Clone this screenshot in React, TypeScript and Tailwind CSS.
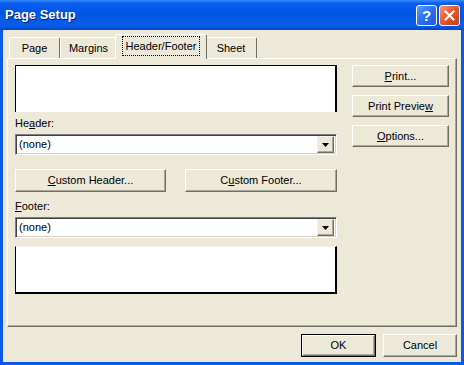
import React from "react";

function Btn({ children, className = "" }: { children: React.ReactNode; className?: string }) {
  return (
    <div
      className={`flex items-center justify-center bg-[#ece9d8] border border-t-white border-l-white border-r-[#716f64] border-b-[#716f64] shadow-[inset_-1px_-1px_0_#aca899] ${className}`}
    >
      {children}
    </div>
  );
}

function Combo() {
  return (
    <div className="h-[21px] w-full flex items-center bg-white border border-t-[#808080] border-l-[#808080] border-r-white border-b-white shadow-[inset_1px_1px_0_#404040,inset_-1px_-1px_0_#d4d0c8] pl-[3px] pr-[2px]">
      <span className="flex-1">(none)</span>
      <div className="w-[17px] h-[17px] flex items-center justify-center bg-[#ece9d8] border border-t-[#f4f3ee] border-l-[#f4f3ee] border-r-[#716f64] border-b-[#716f64] shadow-[inset_-1px_-1px_0_#aca899]">
        <svg width="7" height="4" viewBox="0 0 7 4">
          <path d="M0 0h7L3.5 4z" fill="#000" />
        </svg>
      </div>
    </div>
  );
}

function Tab({ label, w, selected = false }: { label: string; w: string; selected?: boolean }) {
  if (selected) {
    return (
      <div
        className={`${w} h-[25px] -mb-[1px] -mx-[2px] z-10 relative bg-[#ece9d8] border-t border-l border-t-white border-l-white border-r border-r-[#716f64] rounded-t-[2px] flex items-center justify-center pb-[2px]`}
      >
        <span className="px-[3px] py-[1px] leading-[16px] outline outline-1 outline-dotted outline-black">{label}</span>
      </div>
    );
  }
  return (
    <div
      className={`${w} h-[21px] bg-[#ece9d8] border-t border-l border-t-white border-l-white border-r border-r-[#716f64] rounded-t-[2px] flex items-center justify-center pt-[1px]`}
    >
      {label}
    </div>
  );
}

export default function App() {
  return (
    <div className="w-[464px] h-[365px] flex flex-col bg-[#0a5ae6] overflow-hidden font-['Liberation_Sans',Arial,sans-serif] text-[11px] text-black">
      {/* title bar */}
      <div className="h-[30px] shrink-0 flex items-center px-[5px] bg-[linear-gradient(180deg,#3a8cfb_0%,#0b5ff0_10%,#0055e5_45%,#0a5de8_85%,#0046c8_100%)]">
        <span className="flex-1 text-white font-bold text-[13px] [text-shadow:1px_1px_#0a1e7a]">Page Setup</span>
        <div className="flex gap-[2px] mr-[-1px]">
          <div className="w-[21px] h-[21px] rounded-[3px] border border-white bg-[linear-gradient(135deg,#5b9bff_0%,#2a6ff0_50%,#1d5ad8_100%)] flex items-center justify-center text-white font-bold text-[15px] leading-none">
            ?
          </div>
          <div className="w-[21px] h-[21px] rounded-[3px] border border-white bg-[linear-gradient(135deg,#f0957a_0%,#e0582f_50%,#c8401c_100%)] flex items-center justify-center">
            <svg width="11" height="11" viewBox="0 0 11 11">
              <path d="M1.5 1.5l8 8M9.5 1.5l-8 8" stroke="#fff" strokeWidth="2" strokeLinecap="square" />
            </svg>
          </div>
        </div>
      </div>

      {/* body */}
      <div className="flex-1 mx-[3px] mb-[3px] bg-[#ece9d8] flex flex-col px-[4px] pt-[4px]">
        {/* tabs */}
        <div className="h-[24px] flex items-end ml-[2px]">
          <Tab label="Page" w="w-[51px]" />
          <Tab label="Margins" w="w-[57px]" />
          <Tab label="Header/Footer" w="w-[92px]" selected />
          <Tab label="Sheet" w="w-[52px]" />
        </div>

        {/* panel */}
        <div className="h-[269px] border border-t-white border-l-white border-r-[#716f64] border-b-[#716f64] shadow-[inset_-1px_-1px_0_#aca899] flex pl-[7px] pt-[6px]">
          <div className="w-[322px] flex flex-col">
            <div className="h-[47px] bg-white border-t border-l border-r-2 border-black" />
            <div className="h-[22px] flex items-center">
              <span>
                He<u>a</u>der:
              </span>
            </div>
            <Combo />
            <div className="mt-[14px] h-[23px] flex justify-between">
              <Btn className="w-[151px] h-[23px]">
                <span>
                  <u>C</u>ustom Header...
                </span>
              </Btn>
              <Btn className="w-[152px] h-[23px]">
                <span>
                  C<u>u</u>stom Footer...
                </span>
              </Btn>
            </div>
            <div className="h-[25px] flex items-end pb-[3px]">
              <span>
                <u>F</u>ooter:
              </span>
            </div>
            <Combo />
            <div className="mt-[8px] h-[48px] bg-white border-l border-r-2 border-b-2 border-black border-t border-t-[#f4f3ee]" />
          </div>

          <div className="ml-[15px] w-[97px] flex flex-col gap-[8px]">
            <Btn className="h-[22px]">
              <span>
                <u>P</u>rint...
              </span>
            </Btn>
            <Btn className="h-[22px]">
              <span>
                Print Previe<u>w</u>
              </span>
            </Btn>
            <Btn className="h-[22px]">
              <span>
                <u>O</u>ptions...
              </span>
            </Btn>
          </div>
        </div>

        {/* footer buttons */}
        <div className="mt-[7px] flex justify-end gap-[7px]">
          <div className="w-[75px] h-[23px] border border-black">
            <Btn className="w-full h-full">OK</Btn>
          </div>
          <Btn className="w-[74px] h-[23px]">Cancel</Btn>
        </div>
      </div>
    </div>
  );
}
